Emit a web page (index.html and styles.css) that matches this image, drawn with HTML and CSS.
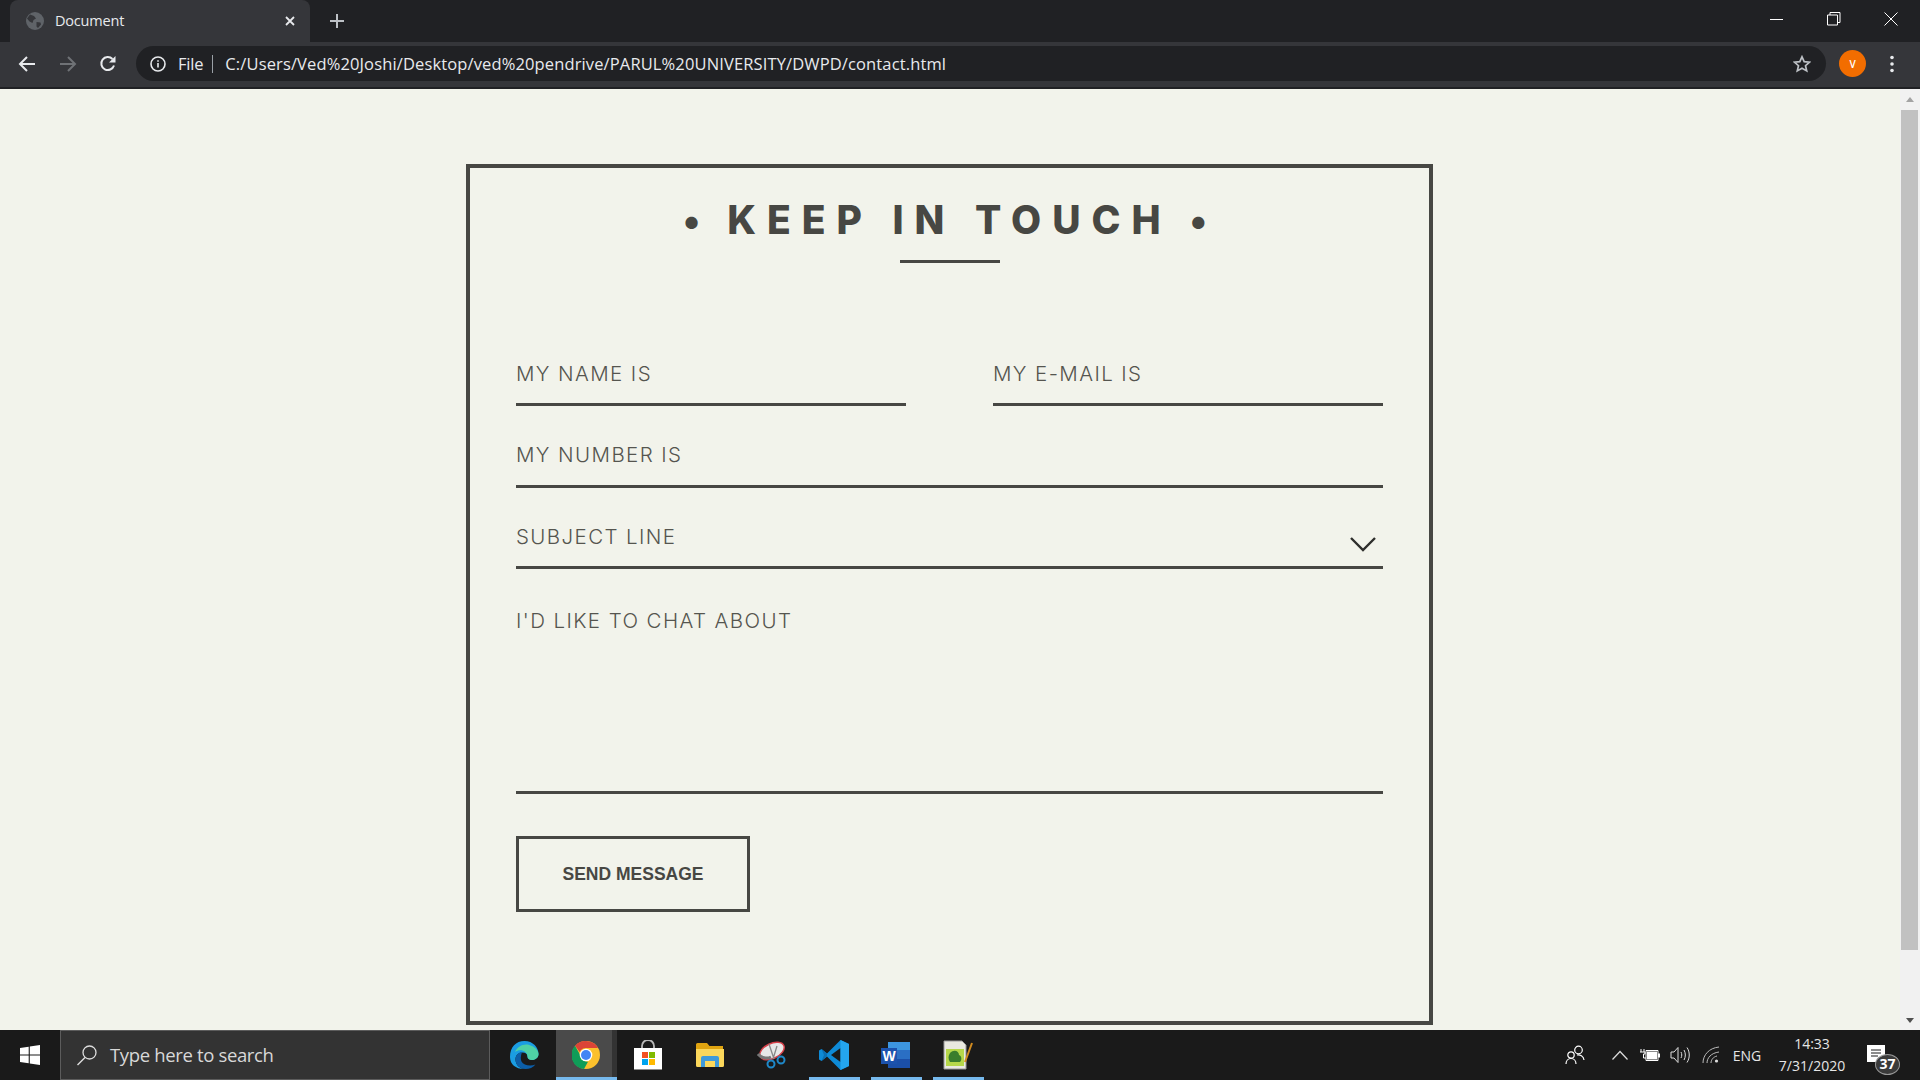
FILE: index.html
```html
<!DOCTYPE html>
<html lang="en">

<head>
    <meta charset="UTF-8">
    <meta name="viewport" content="width=device-width, initial-scale=1.0">
    <title>Document</title>
    <link rel="stylesheet" href="styles.css">
</head>

<body>
    <div class="browser">
        <div class="tabstrip">
            <div class="tab">
                <svg class="favicon" width="18" height="18" viewBox="0 0 18 18"><circle cx="9" cy="9" r="9" fill="#5f6368"/><path d="M4 2.5 8 4l2 2.5-2.500 1.500-1 3-3-1.500L1 6.500zM10.500 10l4 .5.500 2-3 3.500-1.500-1.500z" fill="#35363a"/></svg>
                <span class="tab-title">Document</span>
                <svg class="tab-close" width="10" height="10" viewBox="0 0 10 10"><path d="M1 1l8 8M9 1l-8 8" stroke="#e8eaed" stroke-width="1.800"/></svg>
            </div>
            <svg class="new-tab" width="14" height="14" viewBox="0 0 14 14"><path d="M7 0v14M0 7h14" stroke="#bdc1c6" stroke-width="2"/></svg>
            <div class="window-controls">
                <div class="win-btn win-min"><svg width="14" height="14" viewBox="0 0 14 14"><path d="M0 7.500h13" stroke="#fff" stroke-width="1"/></svg></div>
                <div class="win-btn"><svg width="14" height="14" viewBox="0 0 14 14"><path d="M.5 3h10v10H.5zM3 3V.500h10V10.500h-2.500" fill="none" stroke="#fff"/></svg></div>
                <div class="win-btn"><svg width="14" height="14" viewBox="0 0 14 14"><path d="M.5.500l13 13M13.500.500l-13 13" stroke="#fff"/></svg></div>
            </div>
        </div>
        <div class="toolbar">
            <svg class="nav-icon" width="18" height="18" viewBox="0 0 18 18"><path d="M17 9H2M9 2 2 9l7 7" fill="none" stroke="#e8eaed" stroke-width="2"/></svg>
            <svg class="nav-icon" width="18" height="18" viewBox="0 0 18 18"><path d="M1 9h15M9 2l7 7-7 7" fill="none" stroke="#6f7276" stroke-width="2"/></svg>
            <svg class="nav-icon" width="18" height="18" viewBox="0 0 18 18"><path d="M15 10.500A6.500 6.500 0 1 1 13.500 4" fill="none" stroke="#e8eaed" stroke-width="2"/><path d="M16.500 1v6.500H10z" fill="#e8eaed"/></svg>
            <div class="omnibox">
                <svg class="info-icon" width="16" height="16" viewBox="0 0 16 16"><circle cx="8" cy="8" r="7" fill="none" stroke="#e8eaed" stroke-width="1.600"/><path d="M7.200 7h1.600v4.500H7.200zM7.200 4.200h1.600v1.600H7.200z" fill="#e8eaed"/></svg>
                <span class="scheme">File</span>
                <span class="scheme-sep"></span>
                <span class="url">C:/Users/Ved%20Joshi/Desktop/ved%20pendrive/PARUL%20UNIVERSITY/DWPD/contact.html</span>
                <svg class="star" width="18" height="18" viewBox="0 0 18 18"><path d="M9 1.800l2.200 4.900 5.300.500-4 3.500 1.200 5.200L9 13.200l-4.700 2.700 1.200-5.200-4-3.500 5.300-.500z" fill="none" stroke="#bdc1c6" stroke-width="1.700"/></svg>
            </div>
            <div class="avatar">V</div>
            <svg class="menu-dots" width="6" height="18" viewBox="0 0 6 18"><circle cx="3" cy="2.500" r="1.800" fill="#e8eaed"/><circle cx="3" cy="9" r="1.800" fill="#e8eaed"/><circle cx="3" cy="15.500" r="1.800" fill="#e8eaed"/></svg>
        </div>
    </div>

    <div class="viewport">
        <main class="page">
            <form class="contact-card">
                <h1 class="contact-title"><span class="title-dot">•</span>KEEP IN TOUCH<span class="title-dot title-dot-end">•</span></h1>
                <div class="title-rule"></div>
                <div class="field-row">
                    <div class="field"><label>MY NAME IS</label></div>
                    <div class="field"><label>MY E-MAIL IS</label></div>
                </div>
                <div class="field"><label>MY NUMBER IS</label></div>
                <div class="field field-select">
                    <label>SUBJECT LINE</label>
                    <svg class="chevron" width="28" height="16" viewBox="0 0 28 16"><path d="M2 2l12 12L26 2" fill="none" stroke="#2e2e2c" stroke-width="2.400"/></svg>
                </div>
                <div class="field field-message"><label>I'D LIKE TO CHAT ABOUT</label></div>
                <button class="send-btn" type="button">SEND MESSAGE</button>
            </form>
        </main>
        <div class="scrollbar">
            <div class="arrow-up"></div>
            <div class="thumb"></div>
            <div class="arrow-down"></div>
        </div>
    </div>

    <footer class="taskbar">
        <div class="start-btn">
            <svg width="20" height="20" viewBox="0 0 20 20"><path d="M0 3l8.700-1.200v7.700H0zM9.800 1.600 20 0v9.500H9.800zM0 10.600h8.700v7.700L0 17zM9.800 10.600H20V20L9.800 18.500z" fill="#fff"/></svg>
        </div>
        <div class="search-box">
            <svg width="22" height="22" viewBox="0 0 22 22"><circle cx="13.500" cy="8.500" r="6.500" fill="none" stroke="#ddd" stroke-width="1.300"/><path d="M9 13.500 1.500 21" stroke="#ddd" stroke-width="1.500"/></svg>
            <span class="search-text">Type here to search</span>
        </div>
        <div class="apps">
            <div class="app">
                <svg width="30" height="30" viewBox="0 0 30 30"><path d="M1 17C1 7 7 1 15.500 1 24 1 29.500 7.500 29.500 14c0 3.500-3 6-6.500 6-3 0-4.500-1.500-4.500-3.500 0-2.500-2-4-5-4-4.500 0-7 3-7 7 0 5 4 9.500 10 9.500C7 29.500 1 24.500 1 17z" fill="#1b9de2"/><path d="M29.500 14c0 3.500-3 6-6.500 6-3 0-4.500-1.500-4.500-3.500C18.500 11 11 8 6 12 9 5 17 2.500 23 6c4 2 6.500 5 6.500 8z" fill="#4fd1a5"/><path d="M6.500 19.500c0 5 4 9.500 10 9.500 4 0 7.500-1.500 10-4.500-5 2-12 1-14-3-1-2-1-5 .5-9.500-4 .5-6.500 3.500-6.500 7.500z" fill="#0c5ea8"/></svg>
            </div>
            <div class="app app-active">
                <svg width="28" height="28" viewBox="0 0 28 28"><circle cx="14" cy="14" r="14" fill="#fbc02d"/><path d="M14 0a14 14 0 0 1 12.100 7H14a7 7 0 0 0-6.300 4L3 4.800A14 14 0 0 1 14 0z" fill="#db4437"/><path d="M3 4.800 8.500 14.500a7 7 0 0 0 7.500 6.200L12 28A14 14 0 0 1 3 4.800z" fill="#0f9d58"/><circle cx="14" cy="14" r="6.300" fill="#fff"/><circle cx="14" cy="14" r="5" fill="#4285f4"/></svg>
            </div>
            <div class="app">
                <svg width="30" height="30" viewBox="0 0 30 30"><path d="M9 9V6a6 6 0 0 1 12 0v3" fill="none" stroke="#b8b8b8" stroke-width="1.800"/><path d="M1 8h28v21.500H1z" fill="#fff"/><path d="M9 12h6v6H9z" fill="#f25022"/><path d="M16 12h6v6h-6z" fill="#7fba00"/><path d="M9 19h6v6H9z" fill="#00a4ef"/><path d="M16 19h6v6h-6z" fill="#ffb900"/></svg>
            </div>
            <div class="app">
                <svg width="28" height="24" viewBox="0 0 28 24"><path d="M0 1.500A1.500 1.500 0 0 1 1.500 0H11l2.500 3H27v18.500H0z" fill="#e0a410"/><path d="M0 6h28v16.500a1.500 1.500 0 0 1-1.500 1.500h-25A1.500 1.500 0 0 1 0 22.500z" fill="#fbd75b"/><path d="M5 24v-9a2 2 0 0 1 2-2h14a2 2 0 0 1 2 2v9h-4v-6H9v6z" fill="#3f9ad9"/></svg>
            </div>
            <div class="app">
                <svg width="30" height="30" viewBox="0 0 30 30"><ellipse cx="15" cy="11" rx="13" ry="7.500" transform="rotate(-25 15 11)" fill="#e8e8e8" stroke="#d8404a" stroke-width="1.500"/><path d="M1 14c3 4 9 5 13 3" fill="none" stroke="#777" stroke-width="3"/><path d="M12 4l5 15M20 6l-4 13" stroke="#888" stroke-width="1.300"/><circle cx="14" cy="24" r="3.500" fill="none" stroke="#1e88c9" stroke-width="2"/><circle cx="24" cy="20" r="3.500" fill="none" stroke="#1e88c9" stroke-width="2"/></svg>
            </div>
            <div class="app">
                <svg width="30" height="30" viewBox="0 0 30 30"><path d="M21.500 0 30 4v22l-8.500 4L8 16.500 2.500 21 0 19.500v-9L2.500 9 8 13.500z" fill="#0e8ad6"/><path d="M21.500 8 12 15l9.500 7z" fill="#1a1a1a"/><path d="M21.500 0 30 4v22l-8.500 4z" fill="#24a5ee"/><path d="M2.500 9 8 13.500v3L2.500 21 5 15z" fill="#0a6fb3"/></svg>
            </div>
            <div class="app">
                <svg width="30" height="28" viewBox="0 0 30 28"><path d="M7 1h21a1 1 0 0 1 1 1v24a1 1 0 0 1-1 1H7z" fill="#2a6fc4"/><path d="M7 1h22v8H7z" fill="#3d96e0"/><path d="M7 18h22v9H7z" fill="#1b4fa8"/><path d="M0 7h16v16H0z" fill="#1c52ad"/><text class="word-w" x="8" y="20" text-anchor="middle">W</text></svg>
            </div>
            <div class="app">
                <svg width="30" height="30" viewBox="0 0 30 30"><path d="M1 1h18l4 4v24H1z" fill="#e9e9e0" stroke="#999"/><path d="M3 9h18v17H3z" fill="#b6d84a"/><path d="M7 13c4-4 9-2 9 2 3 1 3 5 1 7H7c-2-3-2-6 0-9z" fill="#3a7d2c"/><path d="M22 22 29 3" stroke="#d18b1f" stroke-width="2"/></svg>
            </div>
        </div>
        <div class="tray">
            <div class="tray-item tray-people"><svg width="20" height="20" viewBox="0 0 20 20"><circle cx="13.500" cy="5" r="3.800" fill="none" stroke="#fff" stroke-width="1.200"/><circle cx="6" cy="10" r="3.200" fill="none" stroke="#fff" stroke-width="1.200"/><path d="M1 19c0-3 2-5.500 5-5.500s5 2.500 5 5.500M12 10c3-.5 6.500 1 7 5" fill="none" stroke="#fff" stroke-width="1.200"/></svg></div>
            <div class="tray-item"><svg width="16" height="10" viewBox="0 0 16 10"><path d="M.5 9.500 8 1.500l7.500 8" fill="none" stroke="#ddd" stroke-width="1.200"/></svg></div>
            <div class="tray-item"><svg width="20" height="14" viewBox="0 0 20 14"><path d="M1 1v3M4 1v3M0 4h5v2H3.500v4H6" fill="none" stroke="#fff"/><path d="M6 2.500h12v10H6z" fill="none" stroke="#fff"/><path d="M7 3.500h10v8H7z" fill="#fff"/><path d="M18 5.500h2v4h-2z" fill="#fff"/></svg></div>
            <div class="tray-item"><svg width="20" height="18" viewBox="0 0 20 18"><path d="M1 6h3l4-4.500v15L4 12H1z" fill="none" stroke="#ddd"/><path d="M11 6c1 2 1 4 0 6M14 4c1.800 3 1.800 7 0 10M17 1.500c3 4.500 3 10.500 0 15" fill="none" stroke="#ddd"/></svg></div>
            <div class="tray-item tray-wifi"><svg width="18" height="18" viewBox="0 0 18 18"><path d="M1 17C1 9 7 2 17 1M5 17c0-5 4-10 12-11M9 17c0-3 2-6 6-7" fill="none" stroke="#bbb"/><circle cx="14.500" cy="15" r="1.600" fill="#ddd"/></svg></div>
            <div class="tray-item tray-lang">ENG</div>
            <div class="clock">
                <span>14:33</span>
                <span>7/31/2020</span>
            </div>
            <div class="notify">
                <svg width="18" height="17" viewBox="0 0 18 17"><path d="M0 0h18v17H0z" fill="#fff"/><path d="M4 5h10M4 8h10M4 11h7" stroke="#1a1a1a"/></svg>
                <span class="notify-badge">37</span>
            </div>
        </div>
    </footer>
</body>

</html>
```
FILE: styles.css
```css
* {
    margin: 0;
    padding: 0;
    box-sizing: border-box;
}
html, body {
    height: 100%;
    overflow: hidden;
}
body {
    display: flex;
    flex-direction: column;
    font-family: "Open Sans", sans-serif;
    background-color: #f2f3eb;
}

/* browser top */
.browser {
    flex: none;
    height: 89px;
    background-color: #202124;
    color: #e8eaed;
}
.tabstrip {
    height: 42px;
    padding-left: 10px;
    display: flex;
    align-items: center;
}
.tab {
    width: 300px;
    height: 42px;
    padding: 0 15px 0 16px;
    background-color: #35363a;
    border-radius: 8px 8px 0 0;
    display: flex;
    align-items: center;
}
.favicon {
    margin-right: 11px;
}
.tab-title {
    flex: 1;
    padding-bottom: 2px;
    font-size: 14.5px;
    letter-spacing: -0.2px;
}
.new-tab {
    margin-left: 20px;
}
.window-controls {
    margin-left: auto;
    margin-right: 1px;
    display: flex;
    align-items: flex-start;
    height: 100%;
}
.win-btn {
    width: 57px;
    height: 37px;
    display: flex;
    align-items: center;
    justify-content: center;
}
.toolbar {
    height: 47px;
    padding: 0 0 2px 18px;
    background-color: #35363a;
    border-bottom: 2px solid #202124;
    display: flex;
    align-items: center;
}
.nav-icon {
    margin-right: 23px;
}
.nav-icon:nth-child(3) {
    margin-left: -1px;
    margin-right: 19px;
}
.omnibox {
    width: 1690px;
    height: 35px;
    padding: 0 15px 0 14px;
    background-color: #202124;
    border-radius: 18px;
    display: flex;
    align-items: center;
}
.scheme {
    margin-left: 12px;
    font-size: 16.5px;
    letter-spacing: -0.2px;
}
.scheme-sep {
    width: 1px;
    height: 18px;
    margin: 0 12px 0 9px;
    background-color: #9aa0a6;
}
.url {
    flex: 1;
    font-size: 16.5px;
    letter-spacing: 0.13px;
}
.avatar {
    width: 27px;
    height: 27px;
    margin-left: 13px;
    border-radius: 50%;
    background-color: #f26d00;
    color: #fff;
    font-size: 10px;
    font-weight: 600;
    display: flex;
    align-items: center;
    justify-content: center;
}
.menu-dots {
    margin-left: 23px;
}

/* page */
.viewport {
    flex: 1;
    min-height: 0;
    display: flex;
}
.page {
    flex: 1;
    padding: 75px 1px 0 0;
}
.contact-card {
    width: 967px;
    height: 861px;
    margin: 0 auto;
    padding: 0 46px;
    border: 4px solid #474743;
    color: #474743;
}
.contact-title {
    margin-top: 29px;
    font-family: Inter, sans-serif;
    font-size: 39px;
    font-weight: 800;
    line-height: 46px;
    letter-spacing: 11px;
    text-align: center;
    white-space: nowrap;
}
.title-dot {
    margin: 0 16px;
}
.title-dot-end {
    margin-left: 18px;
    margin-right: 14px;
}
.title-rule {
    width: 100px;
    height: 3px;
    margin: 17px auto 98px;
    background-color: #474743;
}
.field-row {
    display: flex;
    justify-content: space-between;
}
.field-row .field {
    width: 390px;
    margin-top: 0;
}
.field {
    height: 45px;
    margin-top: 36.5px;
    border-bottom: 3px solid #474743;
    position: relative;
}
.field label {
    display: block;
    padding-top: 0.5px;
    font-family: Inter, sans-serif;
    font-size: 20.5px;
    font-weight: 300;
    line-height: 24px;
    letter-spacing: 1.4px;
    color: #55554f;
}
.chevron {
    position: absolute;
    right: 6px;
    top: 12px;
}
.field-message {
    height: 185px;
    margin-top: 40px;
}
.field-message label {
    padding-top: 0;
}
.send-btn {
    display: block;
    width: 234px;
    height: 76px;
    margin-top: 42px;
    background: none;
    border: 3px solid #474743;
    color: #474743;
    font-family: "Liberation Sans", Arial, sans-serif;
    font-size: 17.5px;
    font-weight: 700;
}

/* scrollbar */
.scrollbar {
    flex: none;
    width: 20px;
    padding: 0 2px 0 1px;
    background-color: #f1f1f1;
    display: flex;
    flex-direction: column;
    align-items: center;
}
.thumb {
    width: 17px;
    height: 840px;
    background-color: #c1c1c1;
    margin-bottom: auto;
}
.arrow-up {
    width: 0;
    height: 0;
    margin: 8px 0 8px;
    border-left: 4.500px solid transparent;
    border-right: 4.500px solid transparent;
    border-bottom: 5px solid #a3a3a3;
}
.arrow-down {
    width: 0;
    height: 0;
    margin-bottom: 7px;
    border-left: 4.500px solid transparent;
    border-right: 4.500px solid transparent;
    border-top: 5px solid #505050;
}

/* windows taskbar */
.taskbar {
    flex: none;
    height: 50px;
    background-color: #1a1a1a;
    display: flex;
    color: #fff;
}
.start-btn {
    width: 60px;
    display: flex;
    align-items: center;
    justify-content: center;
}
.search-box {
    width: 430px;
    padding-left: 15px;
    background-color: #333;
    border: 1px solid #5c5c5c;
    display: flex;
    align-items: center;
}
.search-text {
    margin-left: 12px;
    padding-bottom: 2px;
    font-size: 18.5px;
    letter-spacing: -0.35px;
    color: #d8d8d8;
}
.apps {
    margin-left: 4px;
    display: flex;
}
.app {
    width: 62px;
    padding-right: 2px;
    display: flex;
    align-items: center;
    justify-content: center;
    position: relative;
}
.app:nth-child(n+6)::after, .app-active::after {
    content: "";
    position: absolute;
    left: 5px;
    right: 6px;
    bottom: 0;
    height: 3px;
    background-color: #76b9ed;
}
.app-active {
    background: linear-gradient(to right, #4a4a4a 56px, #333 56px, #333 61px, transparent 61px);
}
.app-active::after {
    left: 0;
    right: 1px;
}
.word-w {
    font-family: "Liberation Sans", sans-serif;
    font-size: 14px;
    font-weight: 700;
    fill: #fff;
}
.tray {
    margin-left: auto;
    padding-right: 19px;
    display: flex;
    align-items: center;
}
.tray-item {
    width: 30px;
    display: flex;
    justify-content: center;
}
.tray-people {
    width: 40px;
    margin-right: 10px;
}
.tray-wifi {
    width: 32px;
}
.tray-lang {
    width: 40px;
    font-size: 14px;
    color: #e6e6e6;
}
.clock {
    width: 90px;
    display: flex;
    flex-direction: column;
    align-items: center;
    font-size: 14px;
    line-height: 22px;
    color: #e6e6e6;
}
.notify {
    width: 44px;
    height: 50px;
    padding: 15px 0 0 10px;
    position: relative;
}
.notify svg {
    display: block;
}
.notify-badge {
    position: absolute;
    left: 18px;
    top: 24px;
    width: 25px;
    height: 21px;
    background-color: #3a3a3a;
    border: 1px solid #999;
    border-radius: 50%;
    font-size: 14px;
    font-weight: 700;
    line-height: 18px;
    text-align: center;
}
```
